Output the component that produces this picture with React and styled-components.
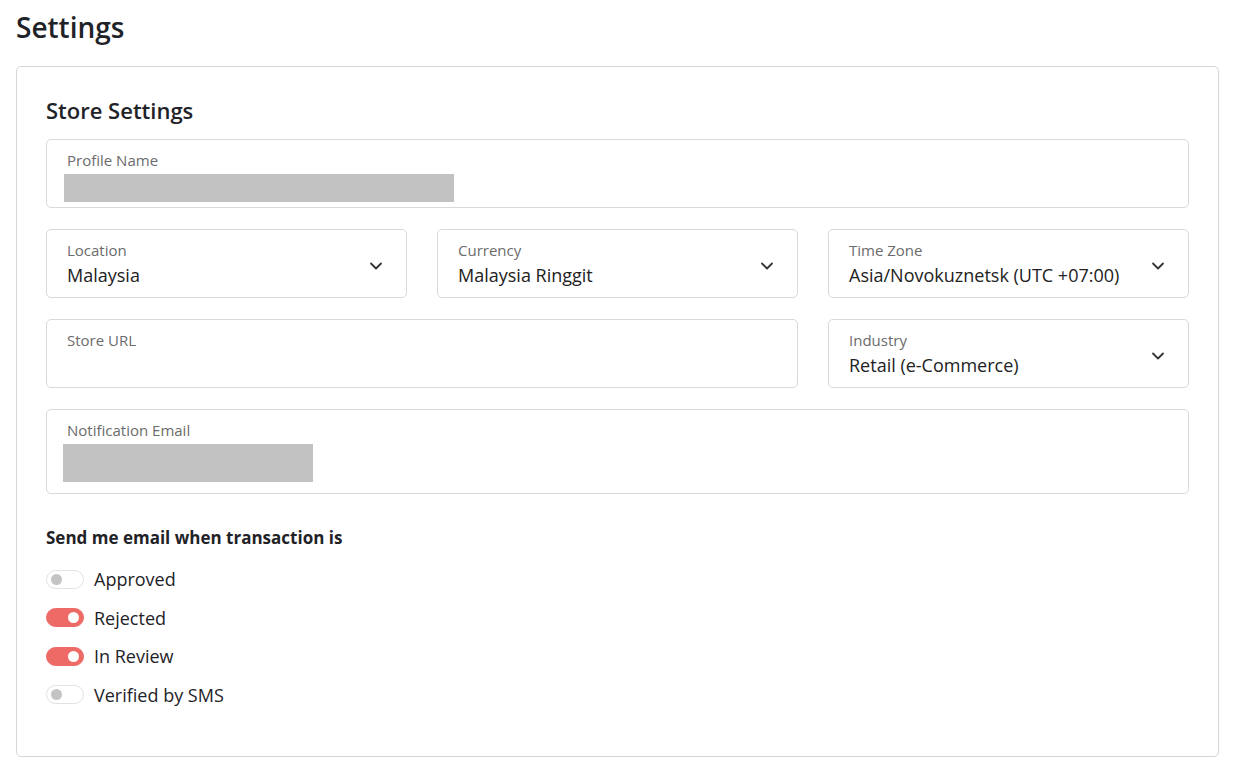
import React from "react";
import styled, { createGlobalStyle } from "styled-components";

const Global = createGlobalStyle`
  body { margin: 0; background: #fff; font-family: "Open Sans", sans-serif; color: #1f2328; }
`;
const Page = styled.div`padding: 8px 22px 9px 16px;`;
const Title = styled.h1`font-size: 28px; font-weight: 600; margin: 0 0 20px; line-height: 38px;`;
const Card = styled.div`border: 1px solid #d6d6d6; border-radius: 5px; padding: 24px 29px 38px; height: 691px; box-sizing: border-box;`;
const H2 = styled.h2`font-size: 22px; font-weight: 600; margin: 0 0 10px; line-height: 38px;`;
const Grid = styled.div`display: grid; grid-template-columns: repeat(3, 1fr); column-gap: 30px; row-gap: 21px;`;
const Field = styled.div`
  grid-column: span ${p => p.span || 1};
  border: 1px solid #d9d9d9; border-radius: 5px; height: ${p => p.h || 69}px; box-sizing: border-box;
  padding: 9px 20px 0; position: relative;
`;
const Label = styled.div`font-size: 15px; color: #6b6b6b; line-height: 22px;`;
const Value = styled.div`font-size: 18px; color: #222; line-height: 26px; margin-top: 1px;`;
const Redact = styled.div`background: #c2c2c2; width: ${p => p.w}px; height: ${p => p.hh}px; margin: ${p => p.m}; `;
const Chevron = styled.svg`position: absolute; right: 22px; top: 28px; width: 16px; height: 16px;`;
const Section = styled.div`font-size: 17px; font-weight: 700; margin: 32px 0 10px; line-height: 24px;`;
const ToggleRow = styled.div`display: flex; align-items: center; gap: 10px; height: 38.5px; font-size: 18px;`;
const Track = styled.div`
  width: 38px; height: 19px; border-radius: 10px; box-sizing: border-box; position: relative;
  background: ${p => p.on ? "#ed6a67" : "#fff"}; border: 1px solid ${p => p.on ? "#ed6a67" : "#e2e2e2"};
`;
const Knob = styled.div`
  position: absolute; top: 3px; width: 11px; height: 11px; border-radius: 50%;
  ${p => p.on ? "right: 4px; background: #fff;" : "left: 4px; background: #c4c4c4;"}
`;

const Chev = () => (
  <Chevron viewBox="0 0 16 16"><path d="M3 5.5l5 5 5-5" fill="none" stroke="#333" strokeWidth="1.8" strokeLinecap="round" strokeLinejoin="round"/></Chevron>
);

export default function App() {
  const toggles = [["Approved", false], ["Rejected", true], ["In Review", true], ["Verified by SMS", false]];
  return (
    <Page>
      <Global />
      <Title>Settings</Title>
      <Card>
        <H2>Store Settings</H2>
        <Grid>
          <Field span={3}><Label>Profile Name</Label><Redact w={390} hh={28} m="3px 0 0 -3px" /></Field>
          <Field><Label>Location</Label><Value>Malaysia</Value><Chev /></Field>
          <Field><Label>Currency</Label><Value>Malaysia Ringgit</Value><Chev /></Field>
          <Field><Label>Time Zone</Label><Value>Asia/Novokuznetsk (UTC +07:00)</Value><Chev /></Field>
          <Field span={2}><Label>Store URL</Label></Field>
          <Field><Label>Industry</Label><Value>Retail (e-Commerce)</Value><Chev /></Field>
          <Field span={3} h={85}><Label>Notification Email</Label><Redact w={250} hh={38} m="3px 0 0 -4px" /></Field>
        </Grid>
        <Section>Send me email when transaction is</Section>
        {toggles.map(([t, on]) => (
          <ToggleRow key={t}><Track on={on}><Knob on={on} /></Track>{t}</ToggleRow>
        ))}
      </Card>
    </Page>
  );
}
